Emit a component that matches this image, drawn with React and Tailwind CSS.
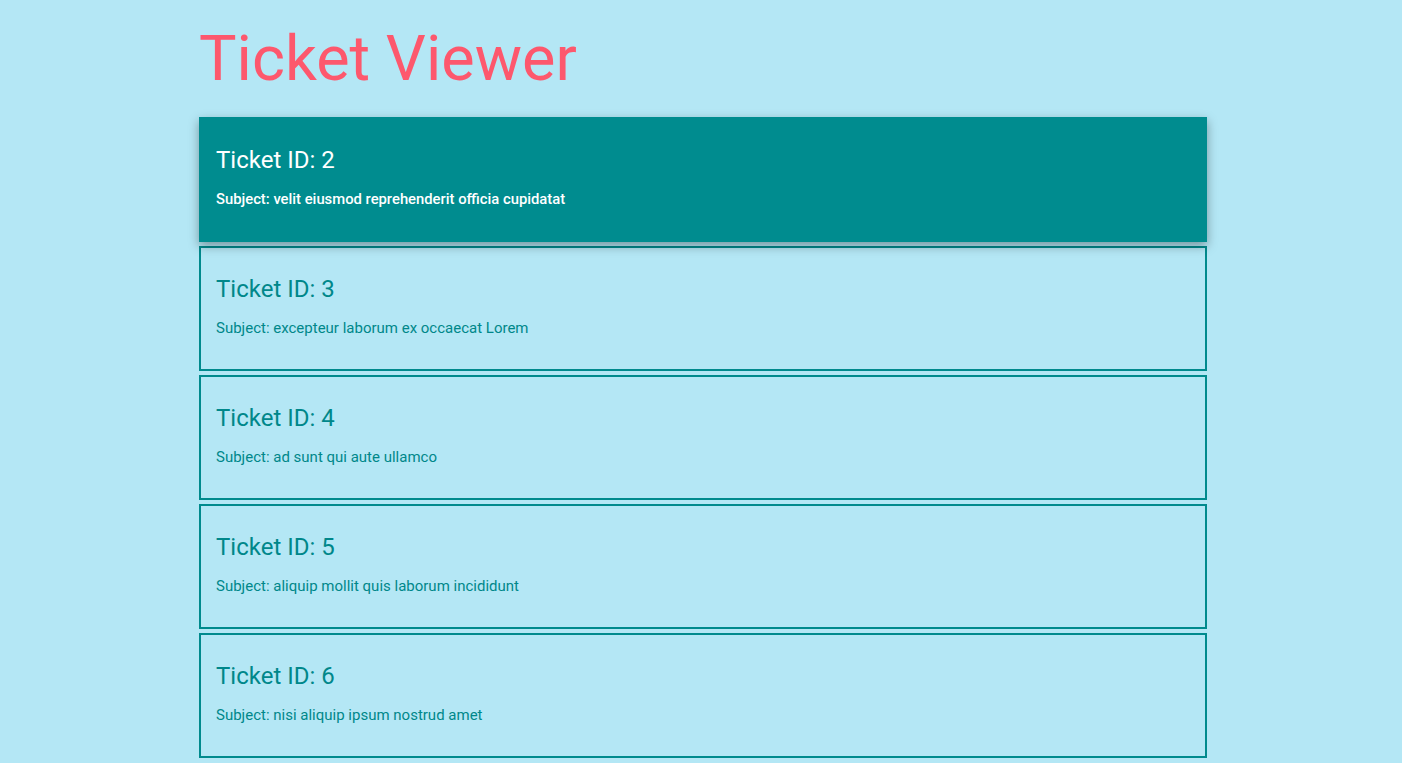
import React from 'react';

const tickets = [
    { id: 2, subject: 'velit eiusmod reprehenderit officia cupidatat' },
    { id: 3, subject: 'excepteur laborum ex occaecat Lorem' },
    { id: 4, subject: 'ad sunt qui aute ullamco' },
    { id: 5, subject: 'aliquip mollit quis laborum incididunt' },
    { id: 6, subject: 'nisi aliquip ipsum nostrud amet' },
];

const App = () => {
    const selected = 2;

    return (
        <div className="h-screen overflow-hidden bg-[#b4e7f5] font-['Roboto','Liberation_Sans',sans-serif]">
            <div className="ml-[199px] w-[1008px] pt-[27px]">
                <h1 className="text-[63px] leading-none font-normal text-[#fd586d] mb-[27px]">Ticket Viewer</h1>

                {tickets.map((t) => {
                    const active = t.id === selected;
                    return (
                        <div
                            key={t.id}
                            className={
                                active
                                    ? 'h-[125px] mb-[4px] border-2 border-[#008c8f] bg-[#008c8f] text-white px-[15px] pt-[27px] shadow-[0_4px_10px_rgba(0,0,0,0.35)] relative'
                                    : 'h-[125px] mb-[4px] border-2 border-[#008a8d] text-[#00878a] px-[15px] pt-[27px]'
                            }
                        >
                            <h2 className="text-[24px] leading-[1.2] font-normal">Ticket ID: {t.id}</h2>
                            <p className={active ? 'mt-[14px] text-[14.8px] leading-[20px] font-medium' : 'mt-[14px] text-[15px] leading-[20px]'}>
                                Subject: {t.subject}
                            </p>
                        </div>
                    );
                })}
            </div>
        </div>
    );
};

export default App;
